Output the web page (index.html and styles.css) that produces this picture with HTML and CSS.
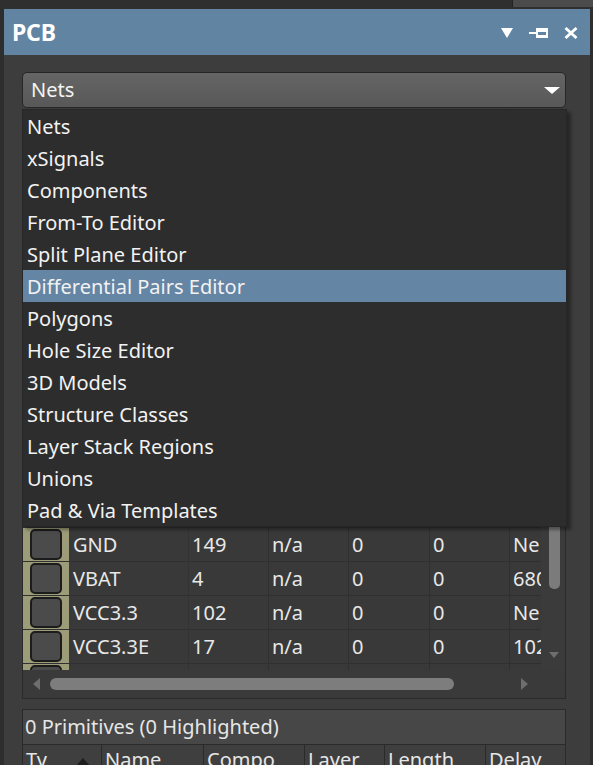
FILE: index.html
```html
<!DOCTYPE html>
<html>
<head>
<meta charset="utf-8">
<link rel="stylesheet" href="styles.css">
</head>
<body>
<div class="topstrip"><div class="topblock"></div></div>
<div class="frame">
  <div class="panel">
    <div class="titlebar">
      <span class="title">PCB</span>
      <div class="tools">
        <svg class="ico" width="14" height="11" viewBox="0 0 14 11"><polygon points="1,0 13,0 7,10" fill="#fff"/></svg>
        <svg class="ico" width="20" height="12" viewBox="0 0 20 12"><rect x="0" y="5" width="7" height="2" fill="#fff"/><rect x="7" y="1" width="12" height="10" fill="#fff"/><rect x="9" y="4" width="8" height="4" fill="#6284a3"/><rect x="9" y="4" width="8" height="1" fill="#fff"/></svg>
        <svg class="ico" width="14" height="12" viewBox="0 0 14 12"><path d="M1.5 1 L12.5 11 M12.5 1 L1.5 11" stroke="#fff" stroke-width="2.8"/></svg>
      </div>
    </div>
    <div class="content">
      <div class="combo">
        <span>Nets</span>
        <svg width="16" height="7" viewBox="0 0 16 7"><polygon points="0,0 16,0 8,7" fill="#fff"/></svg>
      </div>

      <div class="grid">
        <div class="gridtop">
          <div class="rows">
            <div class="row head"><div class="c0"></div><div class="c"></div><div class="c"></div><div class="c"></div><div class="c"></div><div class="c"></div><div class="c"></div></div>
            <div class="row"><div class="c0"><i></i></div><div class="c"></div><div class="c"></div><div class="c"></div><div class="c"></div><div class="c"></div><div class="c"></div></div>
            <div class="row"><div class="c0"><i></i></div><div class="c"></div><div class="c"></div><div class="c"></div><div class="c"></div><div class="c"></div><div class="c"></div></div>
            <div class="row"><div class="c0"><i></i></div><div class="c"></div><div class="c"></div><div class="c"></div><div class="c"></div><div class="c"></div><div class="c"></div></div>
            <div class="row"><div class="c0"><i></i></div><div class="c"></div><div class="c"></div><div class="c"></div><div class="c"></div><div class="c"></div><div class="c"></div></div>
            <div class="row"><div class="c0"><i></i></div><div class="c"></div><div class="c"></div><div class="c"></div><div class="c"></div><div class="c"></div><div class="c"></div></div>
            <div class="row"><div class="c0"><i></i></div><div class="c"></div><div class="c"></div><div class="c"></div><div class="c"></div><div class="c"></div><div class="c"></div></div>
            <div class="row"><div class="c0"><i></i></div><div class="c"></div><div class="c"></div><div class="c"></div><div class="c"></div><div class="c"></div><div class="c"></div></div>
            <div class="row"><div class="c0"><i></i></div><div class="c"></div><div class="c"></div><div class="c"></div><div class="c"></div><div class="c"></div><div class="c"></div></div>
            <div class="row"><div class="c0"><i></i></div><div class="c"></div><div class="c"></div><div class="c"></div><div class="c"></div><div class="c"></div><div class="c"></div></div>
            <div class="row"><div class="c0"><i></i></div><div class="c"></div><div class="c"></div><div class="c"></div><div class="c"></div><div class="c"></div><div class="c"></div></div>
            <div class="row"><div class="c0"><i></i></div><div class="c"></div><div class="c"></div><div class="c"></div><div class="c"></div><div class="c"></div><div class="c"></div></div>
            <div class="row"><div class="c0"><i></i></div><div class="c">GND</div><div class="c">149</div><div class="c">n/a</div><div class="c">0</div><div class="c">0</div><div class="c">Ne</div></div>
            <div class="row"><div class="c0"><i></i></div><div class="c">VBAT</div><div class="c">4</div><div class="c">n/a</div><div class="c">0</div><div class="c">0</div><div class="c">680</div></div>
            <div class="row"><div class="c0"><i></i></div><div class="c">VCC3.3</div><div class="c">102</div><div class="c">n/a</div><div class="c">0</div><div class="c">0</div><div class="c">Ne</div></div>
            <div class="row"><div class="c0"><i></i></div><div class="c">VCC3.3E</div><div class="c">17</div><div class="c">n/a</div><div class="c">0</div><div class="c">0</div><div class="c">102</div></div>
            <div class="row"><div class="c0"><i></i></div><div class="c"></div><div class="c"></div><div class="c"></div><div class="c"></div><div class="c"></div><div class="c"></div></div>
          </div>
          <div class="vscroll">
            <div class="vthumb"></div>
            <svg class="vdown" width="10" height="6" viewBox="0 0 10 6"><polygon points="0,0 10,0 5,6" fill="#6e6e6e"/></svg>
          </div>
        </div>
        <div class="hscroll">
          <svg width="7" height="12" viewBox="0 0 7 12"><polygon points="7,0 7,12 0,6" fill="#6e6e6e"/></svg>
          <div class="hthumb"></div>
          <svg class="hright" width="7" height="12" viewBox="0 0 7 12"><polygon points="0,0 0,12 7,6" fill="#6e6e6e"/></svg>
        </div>
      </div>

      <div class="prims">
        <div class="primhead">0 Primitives (0 Highlighted)</div>
        <div class="primcols">
          <div class="pc pc0">Ty<svg class="sort" width="16" height="9" viewBox="0 0 16 9"><polygon points="0,9 16,9 8,0" fill="#1e1e1e"/></svg></div>
          <div class="pc pc1">Name</div>
          <div class="pc pc2">Compo</div>
          <div class="pc pc3">Layer</div>
          <div class="pc pc4">Length</div>
          <div class="pc pc5">Delay</div>
        </div>
      </div>

      <ul class="dropdown">
        <li>Nets</li>
        <li>xSignals</li>
        <li>Components</li>
        <li>From-To Editor</li>
        <li>Split Plane Editor</li>
        <li class="sel">Differential Pairs Editor</li>
        <li>Polygons</li>
        <li>Hole Size Editor</li>
        <li>3D Models</li>
        <li>Structure Classes</li>
        <li>Layer Stack Regions</li>
        <li>Unions</li>
        <li>Pad &amp; Via Templates</li>
      </ul>
    </div>
  </div>
  <div class="rightedge"></div>
</div>
</body>
</html>
```

FILE: styles.css
```css
* { box-sizing: border-box; }
html, body {
  margin: 0;
  padding: 0;
  width: 593px;
  height: 765px;
  overflow: hidden;
  background: #2e2e2e;
  font-family: "Noto Sans", "Open Sans", sans-serif;
  color: #ececec;
}
.topstrip {
  height: 9px;
  display: flex;
  justify-content: flex-end;
  background: #2f2f2f;
}
.topblock {
  width: 81px;
  height: 7px;
  background: #4b4b4b;
  border-left: 1px solid #222;
}
.frame {
  display: flex;
  height: 756px;
  padding-left: 4px;
  overflow: hidden;
}
.panel {
  width: 586px;
  flex-shrink: 0;
  background: #3d3d3d;
  display: flex;
  flex-direction: column;
  overflow: hidden;
}
.panel > * { flex-shrink: 0; }
.rightedge {
  flex: 1;
  background: #2e2e2e;
}
.titlebar {
  height: 46px;
  background: #6284a3;
  display: flex;
  align-items: center;
  padding: 0 12px 0 8px;
}
.title {
  font-weight: 700;
  font-size: 23px;
  color: #fff;
  flex: 1;
  letter-spacing: -0.2px;
}
.tools {
  display: flex;
  align-items: center;
  gap: 15px;
  padding-top: 2px;
}
.content {
  position: relative;
  padding: 17px 24px 0 18px;
  display: flex;
  flex-direction: column;
}
.content > * { flex-shrink: 0; }
.combo {
  height: 36px;
  border: 1px solid #262626;
  border-radius: 5px;
  background: linear-gradient(#656565, #585858);
  display: flex;
  align-items: center;
  justify-content: space-between;
  padding: 0 5px 0 8px;
  font-size: 20px;
  color: #f4f4f4;
}
.combo span { line-height: 1; padding-bottom: 1px; }
.grid {
  margin-top: 4px;
  border: 1px solid #2a2a2a;
  background: #3a3a3a;
  display: flex;
  flex-direction: column;
}
.gridtop {
  display: flex;
  height: 557px;
  flex-shrink: 0;
}
.rows {
  width: 518px;
  overflow: hidden;
  background: #393939;
}
.row {
  display: grid;
  grid-template-columns: 46px 120px 80px 80px 81px 80px 60px;
  height: 34px;
  border-bottom: 1px solid #303030;
  font-size: 20px;
  color: #e8e8e8;
}
.row.head { height: 41px; }
.c0 {
  background: #9c9c79;
  display: flex;
  align-items: center;
  justify-content: center;
  padding-right: 1px;
}
.c0 i {
  display: block;
  width: 32px;
  height: 31px;
  background: #4b4b4b;
  border: 2px solid #1c1c1c;
  border-radius: 5px;
}
.c {
  padding-left: 3px;
  border-right: 1px solid #303030;
  line-height: 33px;
  white-space: nowrap;
  overflow: hidden;
}
.row .c:nth-child(2) { padding-left: 4px; border-right-color: #333; }
.vscroll {
  flex: 1;
  display: flex;
  flex-direction: column;
  align-items: center;
  background: #3b3b3b;
}
.vthumb {
  width: 11px;
  margin-top: 287px;
  height: 189px;
  background: #7b7b7b;
  border-radius: 5px;
  margin-left: 2px;
}
.vdown {
  margin-top: auto;
  margin-bottom: 12px;
  margin-left: 2px;
}
.hscroll {
  height: 28px;
  flex-shrink: 0;
  display: flex;
  align-items: center;
  padding-left: 10px;
}
.hthumb {
  width: 404px;
  height: 12px;
  border-radius: 6px;
  background: #7d7d7d;
  margin-left: 10px;
}
.hright { margin-left: 67px; }
.prims {
  margin-top: 10px;
  border: 1px solid #2a2a2a;
  border-bottom: none;
  background: #3d3d3d;
}
.primhead {
  height: 35px;
  background: #474747;
  border-bottom: 1px solid #2b2b2b;
  font-size: 20px;
  line-height: 33px;
  padding-left: 2px;
  color: #e6e6e6;
}
.primcols {
  display: grid;
  grid-template-columns: 79px 102px 101px 80px 101px 1fr;
  height: 40px;
  background: #3f3f3f;
  font-size: 20px;
  color: #e6e6e6;
}
.pc {
  border-right: 1px solid #2a2a2a;
  padding-left: 3px;
  line-height: 30px;
  position: relative;
  white-space: nowrap;
  overflow: hidden;
}
.pc5 { border-right: none; }
.sort {
  position: absolute;
  right: 10px;
  top: 13px;
}
.dropdown {
  position: absolute;
  left: 18px;
  top: 54px;
  width: 545px;
  margin: 0;
  padding: 0;
  list-style: none;
  background: #2d2d2d;
  border: 1px solid #262626;
  box-shadow: 4px 3px 3px rgba(0, 0, 0, 0.35);
}
.dropdown li {
  height: 32px;
  line-height: 33px;
  font-size: 20px;
  padding-left: 4px;
  color: #f2f2f2;
  white-space: nowrap;
}
.dropdown li.sel { background: #6585a4; }
```
